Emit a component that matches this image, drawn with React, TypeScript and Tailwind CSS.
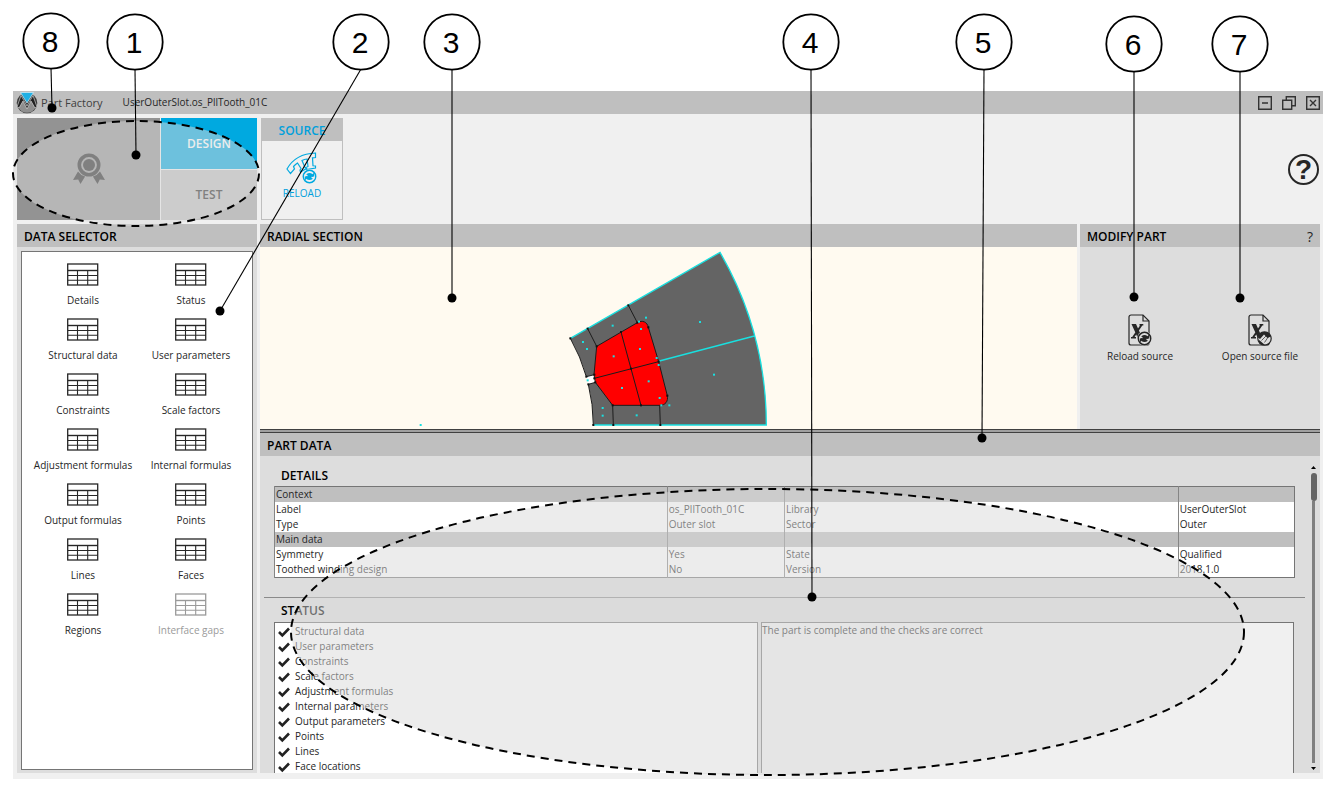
import type { ReactNode } from "react";

const selectors = [
  "Details",
  "Status",
  "Structural data",
  "User parameters",
  "Constraints",
  "Scale factors",
  "Adjustment formulas",
  "Internal formulas",
  "Output formulas",
  "Points",
  "Lines",
  "Faces",
  "Regions",
  "Interface gaps",
];

const checks = [
  "Structural data",
  "User parameters",
  "Constraints",
  "Scale factors",
  "Adjustment formulas",
  "Internal parameters",
  "Output parameters",
  "Points",
  "Lines",
  "Face locations",
];

const details = [
  { head: true, cells: ["Context", "", "", ""] },
  { head: false, cells: ["Label", "os_PllTooth_01C", "Library", "UserOuterSlot"] },
  { head: false, cells: ["Type", "Outer slot", "Sector", "Outer"] },
  { head: true, cells: ["Main data", "", "", ""] },
  { head: false, cells: ["Symmetry", "Yes", "State", "Qualified"] },
  { head: false, cells: ["Toothed winding design", "No", "Version", "2018.1.0"] },
];

// number, circle centre, line end
const callouts = [
  { n: 8, x: 51, y: 41, tx: 52, ty: 108 },
  { n: 1, x: 135, y: 42, tx: 136, ty: 155 },
  { n: 2, x: 361, y: 42, tx: 220, ty: 311 },
  { n: 3, x: 452, y: 42, tx: 452, ty: 298 },
  { n: 4, x: 811, y: 42, tx: 812, ty: 597 },
  { n: 5, x: 984, y: 42, tx: 982, ty: 438 },
  { n: 6, x: 1134, y: 44, tx: 1134, ty: 297 },
  { n: 7, x: 1240, y: 44, tx: 1240, ty: 298 },
];

const cyanPoints = [
  [129, 306], [141, 327], [218, 257], [318, 233], [297, 245], [303, 267], [300, 327],
  [221, 349], [480, 246], [522, 404], [350, 354], [356, 375], [326, 424], [246, 444],
  [359, 474], [388, 496], [364, 496], [188, 504], [188, 527], [290, 526], [143, 421],
  [-358, 555],
];

const blackPoints = [
  [91, 295], [143, 266], [265, 196], [170, 319], [243, 276], [292, 248], [325, 262],
  [139, 410], [163, 404], [145, 433], [166, 427], [163, 415], [273, 386], [356, 365],
  [382, 467], [218, 496], [303, 496], [160, 555], [220, 555], [361, 555],
];

function PanelHeader({ title, children }: { title: string; children?: ReactNode }) {
  return (
    <div className="flex h-[23px] shrink-0 items-center justify-between bg-[#bfbfbf] px-[7px] pt-[2px]">
      <h2 className="text-[12px] font-semibold text-black">{title}</h2>
      {children}
    </div>
  );
}

function TableIcon() {
  return (
    <svg className="h-[23px] w-8" viewBox="0 0 32 23" fill="none" stroke="currentColor">
      <rect x=".7" y="1" width="30" height="21" strokeWidth="1.3" />
      <path d="M1 7.5h30" strokeWidth="1.4" />
      <path d="M1 12.5h30M1 17.3h30M10.5 7.5V22M20.7 7.5V22" strokeWidth="1.1" />
    </svg>
  );
}

function Logo() {
  return (
    <svg className="h-[22px] w-[22px]" viewBox="0 0 22 22">
      <circle cx="11" cy="11" r="10.3" fill="#3a3a3a" />
      <path d="M2.500 15.500 6.500 7l4.500 8 4.500-8 4 8.500a9.500 9.500 0 0 1-17 0z" fill="#8f8f8f" />
      <path d="M1.200 14.500 5 3.500 11 14l6-10.500 3.800 11-1.800 1.500-4-7-4 8-4-8-4 7z" fill="#222" stroke="#e6e6e6" strokeWidth=".6" />
      <path d="M4.500.5h13L11 11z" fill="#1fb0e4" stroke="#d5eef8" strokeWidth=".7" />
    </svg>
  );
}

function MedalIcon() {
  return (
    <svg className="h-8 w-8" viewBox="0 0 32 32" fill="#272727">
      <path d="M5 18.5 0 27l5.2-.6L7.5 31l4.6-7.6A12 12 0 0 1 5 18.5zM27 18.5l5 8.5-5.2-.6-2.3 4.6-4.6-7.6a12 12 0 0 0 7.1-4.9z" />
      <circle cx="16" cy="12" r="9.700" fill="none" stroke="#272727" strokeWidth="3.600" />
      <circle cx="16" cy="12" r="6" />
    </svg>
  );
}

// circled pair of chasing arrows, drawn around 0,0
function ReloadMark({ color, back }: { color: string; back: string }) {
  return (
    <>
      <circle r="7.300" fill={back} stroke="none" />
      <circle r="6.200" fill="none" stroke={color} strokeWidth="1.500" />
      <circle r="3.600" fill={color} stroke="none" />
      <path d="M2 .8 5.200 1.400M-2 -.8-5.200-1.400" stroke={back} strokeWidth="1.200" />
      <path d="M4.600-3.800 4.600.2 1-.8zM-4.600 3.800-4.600-.2-1 .8z" fill={color} stroke="none" />
    </>
  );
}

function ReloadPartIcon() {
  return (
    <svg className="h-8 w-8" viewBox="0 0 32 32" fill="none" stroke="#00a9e0">
      <path
        d="M1 17C6 8 15 1.500 29.500 1v4.500l-3 .3.500 8 2.500.2v2l-9 1.500-.5-2 2-1-1-7.500c-2 .3-3.500.8-5 1.500l3 7 1.500 1-6 3.500-.5-2 1-1.500-3.500-5.500c-1.500 1-3 2.300-4 3.500l1 2.500-4 4.500z"
        strokeWidth="1.200"
      />
      <g transform="translate(23.500 24.500)">
        <ReloadMark color="#00a9e0" back="#f0f0f0" />
      </g>
    </svg>
  );
}

function ExcelIcon({ kind }: { kind: "reload" | "edit" }) {
  return (
    <svg className="h-8 w-6" viewBox="0 0 24 32" fill="none" stroke="#262626">
      <path d="M15 1H3a2 2 0 0 0-2 2v26a2 2 0 0 0 2 2h16a2 2 0 0 0 2-2V7z" strokeWidth="1.200" />
      <path d="M15 1v6h6" strokeWidth="1.200" />
      <path d="M3.500 10H8l6.500 14.500H10zM11.500 10h3.800v1.500h-1L6.500 23H8v1.500H3V23h1.200l7.800-11.500h-.5z" fill="#262626" stroke="none" />
      <g transform="translate(16.500 24.500)">
        {kind === "reload" ? (
          <ReloadMark color="#262626" back="#ddd" />
        ) : (
          <>
            <circle r="6.700" fill="#ddd" strokeWidth="1.200" />
            <path d="M-6.500-1c.5-3.500 4-6 7.500-5.500 2.500.3 4.500 2 5.300 4.500L3-.5-.5-4l-4 4.500zM-6 1 .5 6.500C-3 7-6 4.500-6 1z" fill="#262626" stroke="none" />
            <path d="M-3 2 2-3M4-2 0 4" strokeWidth=".7" />
          </>
        )}
      </g>
    </svg>
  );
}

function RadialSection() {
  return (
    <svg className="h-full w-full" viewBox="-840 21 2451 546" role="img" aria-label="Radial section">
      <path
        d="M91 295 540 37A1037 1037 0 0 1 679 555H160A519 519 0 0 0 145 433L166 427 163 404 139 410A519 519 0 0 0 91 295Z"
        fill="#646464"
      />
      <path d="M139 410 163 404 166 427 145 433Z" fill="#fff" />
      <path
        d="M170 319 292 248C307 239 322 246 325 262L356 365 382 467C385 484 376 496 359 496H218L166 427 162 404Z"
        fill="#f00"
      />
      <g fill="none" stroke="#1c1c1c" strokeWidth="3">
        <path d="M170 319 292 248C307 239 322 246 325 262L356 365 382 467C385 484 376 496 359 496H218L166 427 162 404Z" />
        <path d="M163 415 356 365M243 276 303 496M143 266 170 319M265 196 292 248M218 496 220 555M359 496 361 555" />
        <path d="M91 295A519 519 0 0 1 139 410L163 404M166 427 145 433A519 519 0 0 1 160 555" />
      </g>
      <path d="M91 295 540 37A1037 1037 0 0 1 679 555H160M358 363 643 288" fill="none" stroke="#19e0e0" strokeWidth="4" />
      {blackPoints.map(([x, y]) => (
        <rect key={`${x}-${y}`} x={x - 3} y={y - 3} width="6" height="6" fill="#111" />
      ))}
      {cyanPoints.map(([x, y]) => (
        <rect key={`${x}-${y}`} x={x - 3} y={y - 3} width="6" height="6" fill="#19e0e0" />
      ))}
    </svg>
  );
}

function Callouts() {
  return (
    <svg className="pointer-events-none absolute top-0 left-0" width="1338" height="790" viewBox="0 0 1338 790">
      <g fill="#d9d9d9" fillOpacity=".5" stroke="#000" strokeWidth="2" strokeDasharray="8 6">
        <ellipse cx="136" cy="173.500" rx="123" ry="52.500" />
        <ellipse cx="767.500" cy="632" rx="476.500" ry="143" />
      </g>
      {callouts.map((c) => (
        <g key={c.n}>
          <line x1={c.x} y1={c.y + 27} x2={c.tx} y2={c.ty} stroke="#000" strokeWidth="1.100" />
          <circle cx={c.tx} cy={c.ty} r="4.500" />
          <circle cx={c.x} cy={c.y} r="27.700" fill="#fff" stroke="#000" strokeWidth="1.800" />
          <text x={c.x - 1} y={c.y + 11} textAnchor="middle" className="font-['Liberation_Sans',sans-serif] text-[30px]">
            {c.n}
          </text>
        </g>
      ))}
    </svg>
  );
}

export default function App() {
  return (
    <div className="relative h-screen overflow-hidden bg-white pt-[91px] pr-[15px] pb-[11px] pl-[13px] font-['Open_Sans',sans-serif] text-[10px] leading-[15px] text-[#262626]">
      <div className="flex h-full flex-col bg-[#f0f0f0]">
        <header className="flex h-[23px] shrink-0 items-center bg-[#bfbfbf] px-[3px]">
          <Logo />
          <h1 className="ml-[3px] text-[11px] text-[#404040]">Part Factory</h1>
          <span className="ml-5">UserOuterSlot.os_PllTooth_01C</span>
          <div className="ml-auto flex gap-[10px]">
            <button type="button" aria-label="Minimize">
              <svg className="h-[14px] w-[14px]" viewBox="0 0 14 14" fill="none" stroke="#333" strokeWidth="1.400">
                <path d="M.7.7h12.600v12.600H.7zM4 7h6" />
              </svg>
            </button>
            <button type="button" aria-label="Restore">
              <svg className="h-[14px] w-[14px]" viewBox="0 0 14 14" fill="none" stroke="#333" strokeWidth="1.400">
                <path d="M.7 4.300h9v9h-9zM4.300 4.300V.7h9v9H9.700" />
              </svg>
            </button>
            <button type="button" aria-label="Close">
              <svg className="h-[14px] w-[14px]" viewBox="0 0 14 14" fill="none" stroke="#333" strokeWidth="1.400">
                <path d="M.7.7h12.600v12.600H.7zM4 4l6 6M10 4l-6 6" />
              </svg>
            </button>
          </div>
        </header>

        <div className="flex min-h-0 flex-1 flex-col gap-1 pt-1 pr-[3px] pb-[6px] pl-1">
          <div className="flex h-[102px] shrink-0 gap-1">
            <div className="flex w-[240px] gap-px">
              <button type="button" aria-label="Qualify" className="flex flex-1 items-center justify-center bg-[#939393]">
                <MedalIcon />
              </button>
              <div className="flex w-24 flex-col gap-px text-[12px] font-semibold">
                <button type="button" className="flex-1 bg-[#00a9e0] text-white">
                  DESIGN
                </button>
                <button type="button" className="flex-1 bg-[#bfbfbf]">
                  TEST
                </button>
              </div>
            </div>
            <div className="flex w-[82px] flex-col border border-[#bfbfbf] text-[#00a0dc]">
              <div className="flex h-[22px] items-center justify-center bg-[#bfbfbf] text-[12px] font-semibold">
                SOURCE
              </div>
              <button type="button" className="flex flex-1 flex-col items-center pt-[11px]">
                <ReloadPartIcon />
                <span className="mt-[2px]">RELOAD</span>
              </button>
            </div>
            <button type="button" aria-label="Help" className="mr-px ml-auto self-center">
              <span className="flex h-[31px] w-[31px] items-center justify-center rounded-full border-2 border-[#262626] font-['Liberation_Sans',sans-serif] text-[28px] font-bold">
                ?
              </span>
            </button>
          </div>

          <div className="flex min-h-0 flex-1 gap-[3px]">
            <section className="flex w-[240px] flex-col bg-[#ddd]">
              <PanelHeader title="DATA SELECTOR" />
              <div className="m-1 mb-[3px] flex-1 border border-[#757575] bg-white px-[7px] pt-[11px]">
                <div className="grid grid-cols-2">
                  {selectors.map((name) => (
                    <button
                      key={name}
                      type="button"
                      disabled={name === "Interface gaps"}
                      className="flex h-[55px] flex-col items-center whitespace-nowrap disabled:text-[#9a9a9a]"
                    >
                      <TableIcon />
                      <span className="mt-[7px]">{name}</span>
                    </button>
                  ))}
                </div>
              </div>
            </section>

            <div className="flex min-w-0 flex-1 flex-col">
              <div className="flex h-[205px] shrink-0 gap-[3px]">
                <section className="flex min-w-0 flex-1 flex-col bg-[#fffaf0]">
                  <PanelHeader title="RADIAL SECTION" />
                  <div className="min-h-0 flex-1">
                    <RadialSection />
                  </div>
                </section>
                <section className="flex w-[240px] flex-col bg-[#ddd]">
                  <PanelHeader title="MODIFY PART">
                    <button type="button" aria-label="Modify part help" className="text-[14px]">
                      ?
                    </button>
                  </PanelHeader>
                  <div className="grid grid-cols-2 pt-[67px]">
                    <button type="button" className="flex flex-col items-center">
                      <ExcelIcon kind="reload" />
                      <span className="mt-[3px]">Reload source</span>
                    </button>
                    <button type="button" className="flex flex-col items-center">
                      <ExcelIcon kind="edit" />
                      <span className="mt-[3px]">Open source file</span>
                    </button>
                  </div>
                </section>
              </div>

              <div className="h-1 shrink-0 border-y border-[#404040] bg-[#a0a0a0]" />

              <section className="flex min-h-0 flex-1 flex-col bg-[#ddd]">
                <PanelHeader title="PART DATA" />
                <div className="flex min-h-0 flex-1">
                  <div className="flex min-w-0 flex-1 flex-col pt-[10px] pl-1">
                    <h3 className="pl-[17px] text-[12px] leading-5 font-semibold text-black">DETAILS</h3>
                    <table className="mr-[10px] ml-[10px] table-fixed border-collapse border border-[#757575] bg-white text-left">
                      <colgroup>
                        <col className="w-[38.5%]" />
                        <col className="w-[11.5%]" />
                        <col className="w-[38.6%]" />
                        <col className="w-[11.4%]" />
                      </colgroup>
                      <tbody>
                        {details.map((row) => (
                          <tr key={row.cells[0]} className={row.head ? "h-[15px] bg-[#bfbfbf]" : "h-[15px]"}>
                            {row.cells.map((cell, i) => (
                              <td key={i} className="border-l border-[#858585] p-0 pl-px">
                                {cell}
                              </td>
                            ))}
                          </tr>
                        ))}
                      </tbody>
                    </table>
                    <hr className="mt-[19px] border-[#8a8a8a]" />
                    <h3 className="mt-[3px] pl-[17px] text-[12px] leading-5 font-semibold text-black">STATUS</h3>
                    <div className="mt-px mr-[11px] ml-[10px] flex min-h-0 flex-1 gap-[3px]">
                      <ul className="w-[484px] border border-b-0 border-[#757575] bg-white pt-px pl-[3px]">
                        {checks.map((name) => (
                          <li key={name} className="flex h-[15px] items-center gap-[5px]">
                            <svg className="h-3 w-3" viewBox="0 0 12 12" fill="none" stroke="#222" strokeWidth="2.600">
                              <path d="M1 6 4.300 9.300 11 2.500" />
                            </svg>
                            {name}
                          </li>
                        ))}
                      </ul>
                      <div className="flex-1 border border-b-0 border-[#757575] bg-[#f0f0f0]">
                        The part is complete and the checks are correct
                      </div>
                    </div>
                  </div>
                  <div className="flex w-[15px] flex-col items-center pt-[10px] pb-[3px] pl-[2px]">
                    <svg className="h-1 w-[5px]" viewBox="0 0 5 4">
                      <path d="M0 3h5L2.500 0z" />
                    </svg>
                    <div className="mt-[3px] h-7 w-[6px] rounded-sm bg-[#646464]" />
                    <div className="w-[3px] flex-1 bg-[#808080]" />
                    <svg className="mt-[3px] h-1 w-[5px]" viewBox="0 0 5 4">
                      <path d="M0 1h5L2.500 4z" />
                    </svg>
                  </div>
                </div>
              </section>
            </div>
          </div>
        </div>
      </div>
      <Callouts />
    </div>
  );
}
